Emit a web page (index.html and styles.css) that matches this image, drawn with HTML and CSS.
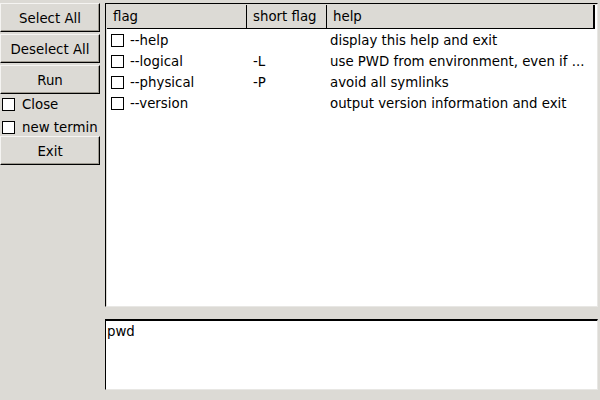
FILE: index.html
```html
<!DOCTYPE html>
<html>
<head>
<meta charset="utf-8">
<link rel="stylesheet" href="styles.css">
</head>
<body>
<div class="app">
  <div class="side">
    <button class="btn">Select All</button>
    <button class="btn">Deselect All</button>
    <button class="btn">Run</button>
    <div class="checks">
      <label class="chk first"><span class="box"></span>Close</label>
      <label class="chk second"><span class="box"></span>new termin</label>
    </div>
    <button class="btn">Exit</button>
  </div>
  <div class="main">
    <div class="tree">
      <div class="head">
        <div class="hc c1">flag</div>
        <div class="hc c2">short flag</div>
        <div class="hc c3">help</div>
      </div>
      <div class="rows">
        <div class="row"><div class="c1"><span class="box"></span>--help</div><div class="c2"></div><div class="c3">display this help and exit</div></div>
        <div class="row"><div class="c1"><span class="box"></span>--logical</div><div class="c2">-L</div><div class="c3">use PWD from environment, even if ...</div></div>
        <div class="row"><div class="c1"><span class="box"></span>--physical</div><div class="c2">-P</div><div class="c3">avoid all symlinks</div></div>
        <div class="row"><div class="c1"><span class="box"></span>--version</div><div class="c2"></div><div class="c3">output version information and exit</div></div>
      </div>
    </div>
    <div class="text">pwd</div>
  </div>
</div>
</body>
</html>
```
FILE: styles.css
```css
html, body {
  margin: 0;
  padding: 0;
  background: #dcdad5;
  font-family: "DejaVu Sans", sans-serif;
  font-size: 13.33px;
  color: #000;
}
.app {
  display: flex;
  height: 400px;
  box-sizing: border-box;
  padding: 3px 2px 10px 0;
  gap: 5px;
}
.side {
  width: 100px;
  display: flex;
  flex-direction: column;
  gap: 2px;
}
.btn {
  height: 29px;
  margin: 0;
  padding: 2px 0 0 0;
  font: inherit;
  color: #000;
  background: #dcdad5;
  border: 1px solid;
  border-color: #f5f4f2 #000 #000 #f5f4f2;
  box-shadow: inset -1px -1px 0 #9e9a91;
}
.checks {
  display: flex;
  flex-direction: column;
}
.chk {
  display: flex;
  align-items: flex-start;
  padding-left: 2px;
  line-height: 13px;
}
.chk.first { height: 22px; padding-top: 2px; box-sizing: border-box; }
.chk.first span + * { }
.chk.second { height: 16px; padding-top: 3px; box-sizing: border-box; }
.chk .box { margin-right: 7px; }
.box {
  display: inline-block;
  width: 11px;
  height: 11px;
  border: 1px solid #000;
  background: #fff;
  margin-right: 6px;
  flex: none;
}
.main {
  flex: 1;
  display: flex;
  flex-direction: column;
  gap: 12px;
}
.tree {
  height: 305px;
  box-sizing: border-box;
  background: #fff;
  border: 1px solid;
  border-color: #000 #e8e7e4 #e8e7e4 #000;
  box-shadow: inset 1px 1px 0 #dcdad5;
  padding: 1px 2px 0 1px;
}
.head {
  display: flex;
  height: 24px;
  background: #dcdad5;
  border-bottom: 1px solid #000;
  box-sizing: border-box;
}
.hc {
  display: flex;
  align-items: center;
  padding-left: 6px;
  box-sizing: border-box;
  border-right: 1px solid #000;
}
.hc.c3 { border-right: 2px solid #000; }
.c1 { width: 140px; flex: none; }
.c2 { width: 80px; flex: none; }
.c3 { flex: 1; white-space: nowrap; }
.rows { padding-top: 1px; }
.row {
  display: flex;
  height: 21px;
  align-items: center;
}
.row .c1 { display: flex; align-items: center; padding-left: 4px; box-sizing: border-box; }
.row .c2 { padding-left: 6px; box-sizing: border-box; }
.row .c3 { padding-left: 3px; }
.text {
  height: 71px;
  box-sizing: border-box;
  background: #fff;
  border: 1px solid;
  border-color: #000 #e8e7e4 #e8e7e4 #000;
  border-top-width: 2px;
  padding: 3px 1px 1px;
}
```
